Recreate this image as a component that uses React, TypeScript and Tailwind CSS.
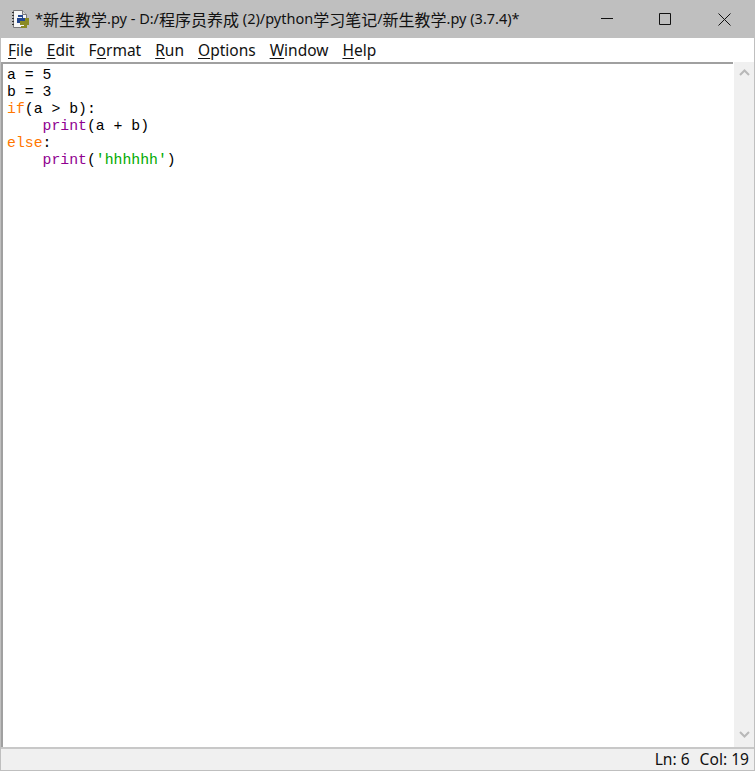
const mono = "font-['Liberation_Mono','DejaVu_Sans_Mono',monospace]";
const ui = "font-['Noto_Sans','Open_Sans','Liberation_Sans',sans-serif]";
const cjk = "text-[16px] font-['Noto_Sans_CJK_SC',sans-serif]";

function PyIcon() {
  return (
    <svg width="19" height="20" viewBox="0 0 19 20" className="shrink-0">
      <path d="M2.5 1.5h9l4 4v13h-13z" fill="#f6f6f6" stroke="#77777a" strokeWidth="1" />
      <path d="M11.5 1.5v4h4" fill="#d5d5d5" stroke="#77777a" strokeWidth="1" />
      <path d="M1 3h2v1H1zM1 6h2v1H1zM1 9h2v1H1zM1 12h2v1H1zM1 15h2v1H1z" fill="#333" />
      <path d="M7 6h5v3h2v3H9v2H6v-5h5V8H7z" fill="#24478f" />
      <path d="M14 9h4v7h-2v3h-6v-2h3v-1H9v-4h5z" fill="#8a8a22" />
    </svg>
  );
}

function MenuItem({ first, rest, pre = "" }: { first: string; rest: string; pre?: string }) {
  return (
    <span>
      {pre}
      <span className="underline underline-offset-2">{first}</span>
      {rest}
    </span>
  );
}

export default function App() {
  return (
    <div className="w-[755px] h-[771px] flex flex-col bg-white overflow-hidden text-black">
      <div className="h-[38px] bg-[#bfbfbf] flex items-center shrink-0">
        <div className="pl-[11px] pr-[5px] flex items-center">
          <PyIcon />
        </div>
        <span className={`${ui} text-[14.5px] text-[#111] whitespace-nowrap flex-1 flex items-center`}>
          *<span className={cjk}>新生教学</span>.py - D:/<span className={cjk}>程序员养成</span>&nbsp;(2)/python<span className={cjk}>学习笔记</span>/<span className={cjk}>新生教学</span>.py (3.7.4)*
        </span>
        <div className="flex items-center">
          <button className="w-[60px] h-[38px] flex items-center justify-center">
            <svg width="12" height="12" viewBox="0 0 12 12">
              <path d="M0 5.5h12" stroke="#111" />
            </svg>
          </button>
          <button className="w-[56px] h-[38px] flex items-center justify-center">
            <svg width="12" height="12" viewBox="0 0 12 12">
              <path d="M.5.5h11v11H.5z" fill="none" stroke="#111" />
            </svg>
          </button>
          <button className="w-[62px] h-[38px] flex items-center justify-center">
            <svg width="13" height="13" viewBox="0 0 13 13" className="mt-[1px]">
              <path d="M.5.5l12 12M12.5.5l-12 12" stroke="#111" />
            </svg>
          </button>
        </div>
      </div>
      <div className="flex-1 min-h-0 flex flex-col border-x border-b border-[#bfbfbf]">
        <div className={`${ui} h-[24px] flex items-center gap-[14px] pl-[7px] pt-[1px] text-[15.5px] text-[#111] shrink-0`}>
          <MenuItem first="F" rest="ile" />
          <MenuItem first="E" rest="dit" />
          <MenuItem pre="F" first="o" rest="rmat" />
          <MenuItem first="R" rest="un" />
          <MenuItem first="O" rest="ptions" />
          <MenuItem first="W" rest="indow" />
          <MenuItem first="H" rest="elp" />
        </div>
        <div className="flex flex-1 min-h-0">
          <div className="flex-1 border-t-2 border-l-2 border-[#a0a0a0] pl-[4px] pt-[3px]">
            <div className={`${mono} text-[14.8px] leading-[17px] text-black whitespace-pre`}>
              <div>a = 5</div>
              <div>b = 3</div>
              <div>
                <span className="text-[#ff7700]">if</span>(a &gt; b):
              </div>
              <div className="pl-[35.5px]">
                <span className="text-[#900090]">print</span>(a + b)
              </div>
              <div>
                <span className="text-[#ff7700]">else</span>:
              </div>
              <div className="pl-[35.5px]">
                <span className="text-[#900090]">print</span>(<span className="text-[#00aa00]">'hhhhhh'</span>)
              </div>
            </div>
          </div>
          <div className="w-[21px] bg-[#f0f0f0] flex flex-col justify-between items-center border-l border-[#ffffff] shrink-0">
            <svg width="11" height="7" viewBox="0 0 11 7" className="mt-[7px]">
              <path d="M1 6l4.5-4.5L10 6" fill="none" stroke="#b8b8b8" strokeWidth="2" />
            </svg>
            <svg width="11" height="7" viewBox="0 0 11 7" className="mb-[9px]">
              <path d="M1 1l4.5 4.5L10 1" fill="none" stroke="#b8b8b8" strokeWidth="2" />
            </svg>
          </div>
        </div>
        <div className={`${ui} h-[23px] bg-[#f0f0f0] border-t-2 border-[#c8c8c8] flex items-center justify-end pr-[5px] gap-[10px] text-[15.6px] text-[#111] shrink-0`}>
          <span>Ln: 6</span>
          <span>Col: 19</span>
        </div>
      </div>
    </div>
  );
}
